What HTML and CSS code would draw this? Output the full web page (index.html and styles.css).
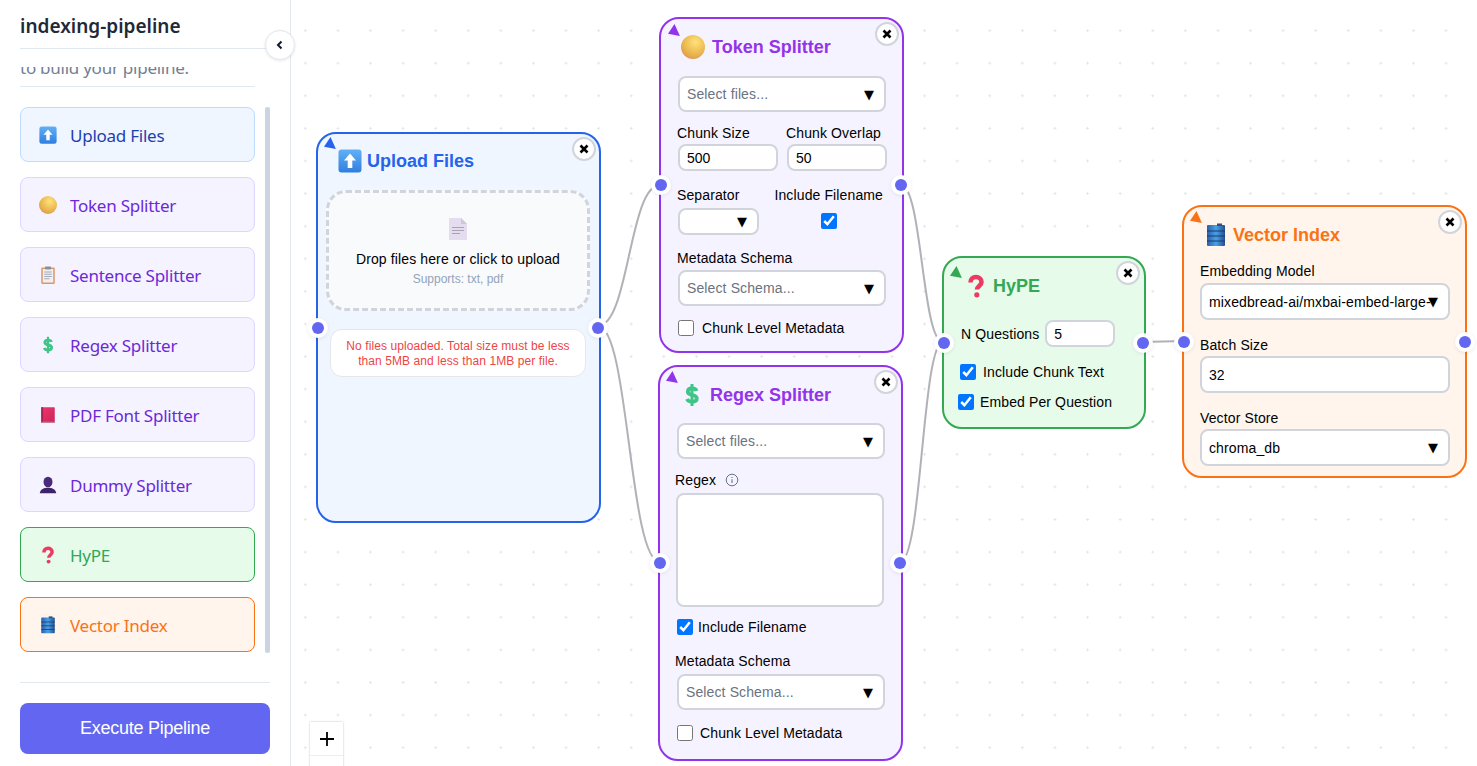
FILE: index.html
```html
<!DOCTYPE html>
<html lang="en">
<head>
    <meta charset="UTF-8">
    <title>indexing-pipeline</title>
    <link rel="stylesheet" href="styles.css">
</head>
<body>
<svg class="sprite" width="0" height="0">
    <defs>
        <linearGradient id="gBlue" x1="0" y1="0" x2="0" y2="1"><stop offset="0" stop-color="#62b0f5"/><stop offset="1" stop-color="#2f7fe0"/></linearGradient>
        <radialGradient id="gCoin" cx="0.6" cy="0.3" r="0.8"><stop offset="0" stop-color="#ffe27a"/><stop offset="0.65" stop-color="#e9b44c"/><stop offset="1" stop-color="#d9905a"/></radialGradient>
        <linearGradient id="gBook" x1="0" y1="0" x2="1" y2="1"><stop offset="0" stop-color="#f0386b"/><stop offset="1" stop-color="#c9245a"/></linearGradient>
        <linearGradient id="gDb" x1="0" y1="0" x2="1" y2="0"><stop offset="0" stop-color="#2a5fa8"/><stop offset="0.5" stop-color="#4aa0e6"/><stop offset="1" stop-color="#24508f"/></linearGradient>
    </defs>
    <symbol id="i-upload" viewBox="0 0 24 24">
        <rect x="0.5" y="0.5" width="23" height="23" rx="3" fill="url(#gBlue)"/>
        <path d="M12 4.5 18 11.5H14.3V19H9.7V11.5H6Z" fill="#fff"/>
    </symbol>
    <symbol id="i-coin" viewBox="0 0 24 24">
        <circle cx="12" cy="12" r="12" fill="url(#gCoin)"/>
    </symbol>
    <symbol id="i-clip" viewBox="0 0 24 24">
        <rect x="3" y="2" width="18" height="22" rx="1.5" fill="#e0965f"/>
        <rect x="5" y="4" width="14" height="18" fill="#eef0f6"/>
        <rect x="8" y="0.5" width="8" height="4" rx="1" fill="#8a8f9c"/>
        <path d="M7 8H17M7 11H17M7 14H17M7 17H14" stroke="#9aa0ae" stroke-width="1.2"/>
    </symbol>
    <symbol id="i-dollar" viewBox="0 0 24 24">
        <path d="M16.500 8C16 6 14.200 5.500 12 5.500 9.500 5.500 7.800 6.800 7.800 8.800 7.800 13.300 16.800 10.700 16.800 15.300 16.800 17.500 14.800 18.700 12 18.700 9.600 18.700 7.800 17.800 7 16" fill="none" stroke="#3fc587" stroke-width="3.800"/>
        <path d="M12 1V23" stroke="#3fc587" stroke-width="3"/>
    </symbol>
    <symbol id="i-book" viewBox="0 0 24 24">
        <rect x="3" y="1.5" width="18" height="21" rx="1" fill="url(#gBook)"/>
        <rect x="3" y="1.5" width="2.5" height="21" fill="#a8234f"/>
        <rect x="3" y="21" width="18" height="1.5" fill="#c9879e"/>
    </symbol>
    <symbol id="i-user" viewBox="0 0 24 24">
        <ellipse cx="12" cy="8" rx="6" ry="7" fill="#4a2a7a"/>
        <path d="M1 23C2 17 7 15.500 12 15.500S22 17 23 23Z" fill="#3f2468"/>
    </symbol>
    <symbol id="i-question" viewBox="0 0 24 24">
        <path d="M6.500 8.500C6.500 5 9 3 12 3S17.500 5 17.500 8C17.500 11.800 13 12 13 15.500" fill="none" stroke="#ee3a62" stroke-width="4.600"/>
        <circle cx="12.800" cy="20.800" r="2.600" fill="#ee3a62"/>
    </symbol>
    <symbol id="i-db" viewBox="0 0 24 24">
        <rect x="3" y="2" width="18" height="21" rx="1" fill="url(#gDb)"/>
        <rect x="13" y="0.500" width="5" height="2.500" fill="#35507a"/>
        <path d="M3 8H21M3 13H21M3 18H21" stroke="#173a70" stroke-width="1"/>
    </symbol>
    <symbol id="i-doc" viewBox="0 0 18 22">
        <path d="M0 0H12L18 6V22H0Z" fill="#e4dcef"/>
        <path d="M12 0 18 6H12Z" fill="#cfc6dc"/>
        <path d="M3 9.500H15M3 12.500H15M3 15.500H11" stroke="#a9a3b5" stroke-width="1"/>
    </symbol>
    <symbol id="i-close" viewBox="0 0 12 12">
        <path d="M2.500 2.500 9.500 9.500M9.500 2.500 2.500 9.500" stroke="#000" stroke-width="2.600"/>
    </symbol>
</svg>

<aside class="sidebar">
    <h1 class="side-title">indexing-pipeline</h1>
    <button class="collapse-btn">
        <svg width="10" height="10" viewBox="0 0 10 10"><path d="M6.500 1.500 3 5 6.500 8.500" fill="none" stroke="#111827" stroke-width="2"/></svg>
    </button>
    <div class="side-intro"><p>Drag and drop nodes<br>to build your pipeline.</p></div>
    <div class="side-list-wrap">
        <ul class="side-list">
            <li class="side-item item-blue"><svg class="side-icon"><use href="#i-upload"/></svg>Upload Files</li>
            <li class="side-item item-purple"><svg class="side-icon"><use href="#i-coin"/></svg>Token Splitter</li>
            <li class="side-item item-purple"><svg class="side-icon"><use href="#i-clip"/></svg>Sentence Splitter</li>
            <li class="side-item item-purple"><svg class="side-icon"><use href="#i-dollar"/></svg>Regex Splitter</li>
            <li class="side-item item-purple"><svg class="side-icon"><use href="#i-book"/></svg>PDF Font Splitter</li>
            <li class="side-item item-purple"><svg class="side-icon"><use href="#i-user"/></svg>Dummy Splitter</li>
            <li class="side-item item-green"><svg class="side-icon"><use href="#i-question"/></svg>HyPE</li>
            <li class="side-item item-orange"><svg class="side-icon"><use href="#i-db"/></svg>Vector Index</li>
        </ul>
        <div class="side-scroll"></div>
    </div>
    <div class="side-footer">
        <button class="run-btn">Execute Pipeline</button>
    </div>
</aside>

<main class="canvas">
    <svg class="edges" width="1186" height="766" viewBox="291 0 1186 766">
        <path d="M598 326C629 326 629 185 660 185"/>
        <path d="M598 326C629 326 629 562 660 562"/>
        <path d="M901 185C922 185 922 342 943 342"/>
        <path d="M900 562C922 562 922 342 943 342"/>
        <path d="M1143 342C1163 342 1163 341 1184 341"/>
    </svg>

    <!-- upload -->
    <section class="node node-upload">
        <svg class="corner" viewBox="0 0 12 12"><path d="M0 9 6 0 11 11Z"/></svg>
        <button class="close"><svg width="12" height="12"><use href="#i-close"/></svg></button>
        <span class="handle handle-in"></span>
        <span class="handle handle-out"></span>
        <h2 class="node-title"><svg class="node-icon"><use href="#i-upload"/></svg>Upload Files</h2>
        <div class="dropzone">
            <svg class="doc-icon"><use href="#i-doc"/></svg>
            <p class="drop-text">Drop files here or click to upload</p>
            <p class="drop-sub">Supports: txt, pdf</p>
        </div>
        <p class="notice">No files uploaded. Total size must be less than 5MB and less than 1MB per file.</p>
    </section>

    <!-- token splitter -->
    <section class="node node-token">
        <svg class="corner" viewBox="0 0 12 12"><path d="M0 9 6 0 11 11Z"/></svg>
        <button class="close"><svg width="12" height="12"><use href="#i-close"/></svg></button>
        <span class="handle handle-in"></span>
        <span class="handle handle-out"></span>
        <h2 class="node-title"><svg class="node-icon"><use href="#i-coin"/></svg>Token Splitter</h2>
        <div class="select select-tall placeholder"><span>Select files...</span><b>▼</b></div>
        <div class="two-col">
            <label class="field"><span class="label">Chunk Size</span><input class="input input-small" value="500"></label>
            <label class="field"><span class="label">Chunk Overlap</span><input class="input input-small" value="50"></label>
        </div>
        <div class="sep-row">
            <div class="field sep-field"><span class="label">Separator</span><div class="select select-small"><span></span><b>▼</b></div></div>
            <label class="field file-field"><span class="label">Include Filename</span><input class="check" type="checkbox" checked></label>
        </div>
        <span class="label label-schema">Metadata Schema</span>
        <div class="select select-tall placeholder"><span>Select Schema...</span><b>▼</b></div>
        <label class="check-row row-chunk"><input class="check" type="checkbox"><span>Chunk Level Metadata</span></label>
    </section>

    <!-- regex splitter -->
    <section class="node node-regex">
        <svg class="corner" viewBox="0 0 12 12"><path d="M0 9 6 0 11 11Z"/></svg>
        <button class="close"><svg width="12" height="12"><use href="#i-close"/></svg></button>
        <span class="handle handle-in"></span>
        <span class="handle handle-out"></span>
        <h2 class="node-title"><svg class="node-icon"><use href="#i-dollar"/></svg>Regex Splitter</h2>
        <div class="select select-tall placeholder"><span>Select files...</span><b>▼</b></div>
        <div class="regex-label">
            <span class="label">Regex</span>
            <svg width="14" height="14" viewBox="0 0 14 14"><circle cx="7" cy="7" r="5.800" fill="none" stroke="#64748b" stroke-width="1"/><path d="M7 6.200V10M7 4V5" stroke="#64748b" stroke-width="1.100"/></svg>
        </div>
        <textarea class="regex-box"></textarea>
        <label class="check-row row-file"><input class="check" type="checkbox" checked><span>Include Filename</span></label>
        <span class="label label-schema2">Metadata Schema</span>
        <div class="select select-tall placeholder"><span>Select Schema...</span><b>▼</b></div>
        <label class="check-row row-chunk2"><input class="check" type="checkbox"><span>Chunk Level Metadata</span></label>
    </section>

    <!-- hype -->
    <section class="node node-hype">
        <svg class="corner" viewBox="0 0 12 12"><path d="M0 9 6 0 11 11Z"/></svg>
        <button class="close"><svg width="12" height="12"><use href="#i-close"/></svg></button>
        <span class="handle handle-in"></span>
        <span class="handle handle-out"></span>
        <h2 class="node-title"><svg class="node-icon"><use href="#i-question"/></svg>HyPE</h2>
        <label class="hype-q"><span class="label">N Questions</span><input class="input input-q" value="5"></label>
        <label class="check-row row-text"><input class="check" type="checkbox" checked><span>Include Chunk Text</span></label>
        <label class="check-row row-embed"><input class="check" type="checkbox" checked><span>Embed Per Question</span></label>
    </section>

    <!-- vector index -->
    <section class="node node-vector">
        <svg class="corner" viewBox="0 0 12 12"><path d="M0 9 6 0 11 11Z"/></svg>
        <button class="close"><svg width="12" height="12"><use href="#i-close"/></svg></button>
        <span class="handle handle-in"></span>
        <span class="handle handle-out"></span>
        <h2 class="node-title"><svg class="node-icon"><use href="#i-db"/></svg>Vector Index</h2>
        <span class="label">Embedding Model</span>
        <div class="select select-wide"><span>mixedbread-ai/mxbai-embed-large-</span><b>▼</b></div>
        <span class="label label-gap">Batch Size</span>
        <input class="input input-wide" value="32">
        <span class="label label-gap label-store">Vector Store</span>
        <div class="select select-wide"><span>chroma_db</span><b>▼</b></div>
    </section>

    <div class="zoom-ctrl">
        <button class="zoom-btn"><svg width="16" height="16" viewBox="0 0 16 16"><path d="M8 1V15M1 8H15" stroke="#000" stroke-width="1.800"/></svg></button>
        <button class="zoom-btn"></button>
    </div>
</main>
</body>
</html>
```

FILE: styles.css
```css
* {
    box-sizing: border-box;
}

html, body {
    height: 100%;
    margin: 0;
}

body {
    display: flex;
    height: 766px;
    overflow: hidden;
    background-color: #ffffff;
    font-family: "Liberation Sans", Arial, sans-serif;
    color: #000000;
}

.sprite {
    position: absolute;
}

/* sidebar */
.sidebar {
    position: relative;
    flex: none;
    display: flex;
    flex-direction: column;
    width: 291px;
    padding: 0 20px;
    border-right: 1px solid #e2e8f0;
    font-family: "Noto Sans", sans-serif;
}

.side-title {
    height: 49px;
    margin: 0;
    padding-top: 13px;
    border-bottom: 1px solid #e2e8f0;
    font-size: 19px;
    line-height: 26px;
    font-weight: 600;
    color: #1f2937;
}

.collapse-btn {
    position: absolute;
    top: 30px;
    right: -5px;
    display: flex;
    align-items: center;
    justify-content: center;
    width: 30px;
    height: 30px;
    padding: 0;
    border: 1px solid #e2e8f0;
    border-radius: 50%;
    background-color: #ffffff;
    box-shadow: 0 1px 3px rgba(0, 0, 0, 0.1);
}

.side-intro {
    display: flex;
    align-items: flex-end;
    height: 20px;
    margin-top: 18px;
    width: 235px;
    overflow: hidden;
    border-bottom: 1px solid #e2e8f0;
}

.side-intro p {
    flex: none;
    margin: 0 0 8px;
    font-size: 17px;
    letter-spacing: -0.25px;
    line-height: 20px;
    color: #718096;
}

.side-list-wrap {
    display: flex;
    justify-content: space-between;
    height: 546px;
    margin-top: 20px;
}

.side-list {
    display: flex;
    flex-direction: column;
    gap: 15px;
    width: 235px;
    margin: 0;
    padding: 0;
    list-style: none;
}

.side-item {
    display: flex;
    align-items: center;
    height: 55px;
    padding: 1px 0 0 18px;
    border: 1px solid;
    border-radius: 8px;
    font-size: 17px;
    letter-spacing: -0.25px;
}

.side-icon {
    flex: none;
    width: 18px;
    height: 18px;
    margin-right: 13px;
}

.item-blue {
    background-color: #eff6ff;
    border-color: #bfdbfe;
    color: #1e40af;
}

.item-purple {
    background-color: #f5f3ff;
    border-color: #ddd6fe;
    color: #6d28d9;
}

.item-green {
    background-color: #e6fbea;
    border-color: #34a853;
    color: #2fa85a;
}

.item-orange {
    background-color: #fff5ec;
    border-color: #f97316;
    color: #f97316;
}

.side-scroll {
    width: 5px;
    border-radius: 2px;
    background-color: #cbd5e1;
}

.side-footer {
    margin-top: 29px;
    padding-top: 20px;
    border-top: 1px solid #e2e8f0;
}

.run-btn {
    display: block;
    width: 100%;
    height: 51px;
    border: none;
    border-radius: 8px;
    background-color: #6366f1;
    color: #ffffff;
    font-family: "Liberation Sans", Arial, sans-serif;
    font-size: 18px;
    letter-spacing: -0.25px;
}

/* canvas */
.canvas {
    position: relative;
    flex: 1;
    overflow: hidden;
    background-image: radial-gradient(circle, #e6e6e6 1px, transparent 1.2px);
    background-size: 32.6px 32.6px;
    background-position: -2px 14.3px;
}

.edges {
    position: absolute;
    top: 0;
    left: 0;
}

.edges path {
    fill: none;
    stroke: #b1b1b7;
    stroke-width: 2;
}

.zoom-ctrl {
    position: absolute;
    left: 19px;
    top: 722px;
    display: flex;
    flex-direction: column;
    box-shadow: 0 0 2px rgba(0, 0, 0, 0.25);
}

.zoom-btn {
    display: flex;
    align-items: center;
    justify-content: center;
    width: 33px;
    height: 34px;
    padding: 0;
    border: none;
    border-bottom: 1px solid #eeeeee;
    background-color: #ffffff;
}

/* nodes */
.node {
    position: absolute;
    display: flex;
    flex-direction: column;
    align-items: flex-start;
    border: 2px solid;
    border-radius: 20px;
}

.node-upload {
    left: 25px;
    top: 132px;
    width: 285px;
    height: 391px;
    padding: 0 8px;
    background-color: #eff6ff;
    border-color: #2563eb;
}

.node-token {
    left: 368px;
    top: 17px;
    width: 245px;
    height: 336px;
    padding: 0 16px;
    background-color: #f5f3ff;
    border-color: #9333ea;
}

.node-regex {
    left: 367px;
    top: 365px;
    width: 245px;
    height: 396px;
    padding: 0 16px;
    background-color: #f5f3ff;
    border-color: #9333ea;
}

.node-hype {
    left: 651px;
    top: 256px;
    width: 204px;
    height: 173px;
    padding: 0 16px;
    background-color: #e6fbea;
    border-color: #34a853;
}

.node-vector {
    left: 891px;
    top: 205px;
    width: 285px;
    height: 273px;
    padding: 0 16px;
    background-color: #fff5ec;
    border-color: #f97316;
}

.corner {
    position: absolute;
    left: 6px;
    width: 13px;
    height: 13px;
}

.node-upload .corner {
    top: 3px;
}

.node-upload .corner path {
    fill: #2563eb;
}

.node-token .corner {
    top: 5px;
    left: 7px;
}

.node-regex .corner {
    top: 4px;
}

.node-token .corner path,
.node-regex .corner path {
    fill: #9333ea;
}

.node-hype .corner {
    top: 8px;
}

.node-hype .corner path {
    fill: #34a853;
}

.node-vector .corner {
    top: 4px;
}

.node-vector .corner path {
    fill: #f97316;
}

.close {
    position: absolute;
    top: 3px;
    right: 3px;
    display: flex;
    align-items: center;
    justify-content: center;
    width: 24px;
    height: 24px;
    padding: 0;
    border: 2px solid #d1d5db;
    border-radius: 50%;
    background-color: #ffffff;
}

.node-hype .close {
    right: 4px;
}

.handle {
    position: absolute;
    top: 50%;
    width: 12px;
    height: 12px;
    border-radius: 50%;
    background-color: #6366f1;
    box-shadow: 0 0 0 4px #ffffff, 0 1px 5px 3px rgba(0, 0, 0, 0.12);
}

.handle-in {
    left: 0;
    transform: translate(-50%, -50%);
}

.handle-out {
    right: 1px;
    transform: translate(50%, -50%);
}

.node-vector .handle-out {
    right: 0;
}

.node-title {
    display: flex;
    align-items: center;
    height: 24px;
    margin: 0;
    font-size: 18px;
    font-weight: 700;
    white-space: nowrap;
}

.node-icon {
    flex: none;
    width: 24px;
    height: 24px;
    margin-right: 6px;
}

.node-upload .node-title {
    margin: 15px 0 17px 12px;
    color: #2563eb;
}

.node-upload .node-icon {
    margin-right: 5px;
}

.node-token .node-title {
    margin: 16px 0 17px 4px;
    color: #9333ea;
}

.node-token .node-icon {
    margin-right: 7px;
}

.node-regex .node-title {
    margin: 16px 0 16px 4px;
    color: #9333ea;
}

.node-hype .node-title {
    margin: 16px 0 0 4px;
    color: #34a853;
}

.node-hype .node-icon {
    margin-right: 5px;
}

.node-vector .node-title {
    margin: 16px 0 16px 4px;
    color: #f97316;
}

.node-vector .node-icon {
    margin-right: 5px;
}

.label {
    font-size: 14px;
    line-height: 16px;
    letter-spacing: 0.12px;
}

.select {
    display: flex;
    align-items: center;
    justify-content: space-between;
    border: 2px solid #d1d5db;
    border-radius: 8px;
    background-color: #ffffff;
    padding: 0 10px 0 7px;
    font-size: 14px;
    letter-spacing: 0.12px;
    overflow: hidden;
    white-space: nowrap;
}

.select span {
    overflow: hidden;
}

.select b {
    flex: none;
    font-family: "DejaVu Sans", sans-serif;
    font-size: 13px;
    font-weight: 400;
}

.placeholder span {
    color: #6b7280;
}

.select-tall {
    flex: none;
    width: 208px;
    height: 36px;
    margin-left: 1px;
}

.select-small {
    width: 81px;
    height: 27px;
    margin-left: 1px;
}

.select-wide {
    flex: none;
    width: 250px;
    height: 37px;
}

/* the long model name runs under the arrow */
.select-wide span {
    flex: none;
    overflow: visible;
    margin-right: -14px;
}

.input {
    display: block;
    border: 2px solid #d1d5db;
    border-radius: 8px;
    background-color: #ffffff;
    padding: 0 7px;
    outline: none;
    font-family: inherit;
    font-size: 14px;
    color: #000000;
}

.input-small {
    width: 100px;
    height: 27px;
    margin: 3px 0 0 1px;
}

.input-wide {
    width: 250px;
    height: 37px;
    flex: none;
    margin-top: -1px;
}

.input-q {
    width: 70px;
    height: 27px;
}

.two-col {
    display: flex;
    gap: 8px;
    margin-top: 13px;
}

.field {
    display: flex;
    flex-direction: column;
    align-items: flex-start;
}

.sep-row {
    display: flex;
    margin-top: 16px;
    width: 209px;
    justify-content: space-between;
}

.sep-field .label {
    margin-bottom: 5px;
}

.file-field {
    align-items: center;
    margin-right: 3px;
}

.file-field .check {
    margin-top: 10px;
}

.check {
    flex: none;
    width: 16px;
    height: 16px;
    margin: 0;
    accent-color: #0075ff;
}

.check-row {
    display: flex;
    align-items: center;
    gap: 8px;
    font-size: 14px;
    letter-spacing: 0.12px;
}

.label-schema {
    margin: 15px 0 4px;
}

.row-chunk {
    margin: 14px 0 0 1px;
}

.regex-label {
    display: flex;
    align-items: center;
    gap: 9px;
    margin-top: 13px;
    margin-left: -1px;
}

.regex-box {
    flex: none;
    width: 208px;
    height: 114px;
    margin-top: 5px;
    border: 2px solid #d1d5db;
    border-radius: 8px;
    background-color: #ffffff;
    resize: none;
    outline: none;
}

.row-file {
    gap: 5px;
    margin: 12px 0 0 1px;
}

.label-schema2 {
    margin: 18px 0 5px -1px;
}

.row-chunk2 {
    gap: 7px;
    margin: 15px 0 0 1px;
}

.hype-q {
    display: flex;
    align-items: center;
    gap: 6px;
    margin-top: 22px;
    margin-left: 1px;
}

.row-text {
    gap: 7px;
    margin-top: 17px;
}

.row-embed {
    gap: 6px;
    margin-top: 14px;
    margin-left: -2px;
}

.node-vector .label {
    margin-bottom: 4px;
}

.node-vector .label-gap {
    margin-top: 17px;
}

.node-vector .label-store {
    margin-top: 17px;
    margin-bottom: 3px;
}

.node-vector .select b {
    margin-left: -6px;
}

/* upload box */
.dropzone {
    display: flex;
    flex-direction: column;
    align-items: center;
    flex: none;
    width: 264px;
    height: 121px;
    border: 3px dashed #d1d5db;
    border-radius: 20px;
    background-color: #f8fafc;
    padding-top: 25px;
}

.doc-icon {
    width: 18px;
    height: 22px;
}

.drop-text {
    margin: 10px 0 0;
    font-size: 14px;
    line-height: 18px;
    letter-spacing: 0.12px;
}

.drop-sub {
    margin: 4px 0 0;
    font-size: 12px;
    line-height: 14px;
    color: #94a3b8;
}

.notice {
    width: 256px;
    height: 48px;
    margin: 18px 0 0 4px;
    padding: 9px 6px 0;
    border: 1px solid #e5e7eb;
    border-radius: 12px;
    background-color: #ffffff;
    text-align: center;
    font-size: 12px;
    line-height: 15px;
    letter-spacing: 0.08px;
    color: #ef4444;
}
```
